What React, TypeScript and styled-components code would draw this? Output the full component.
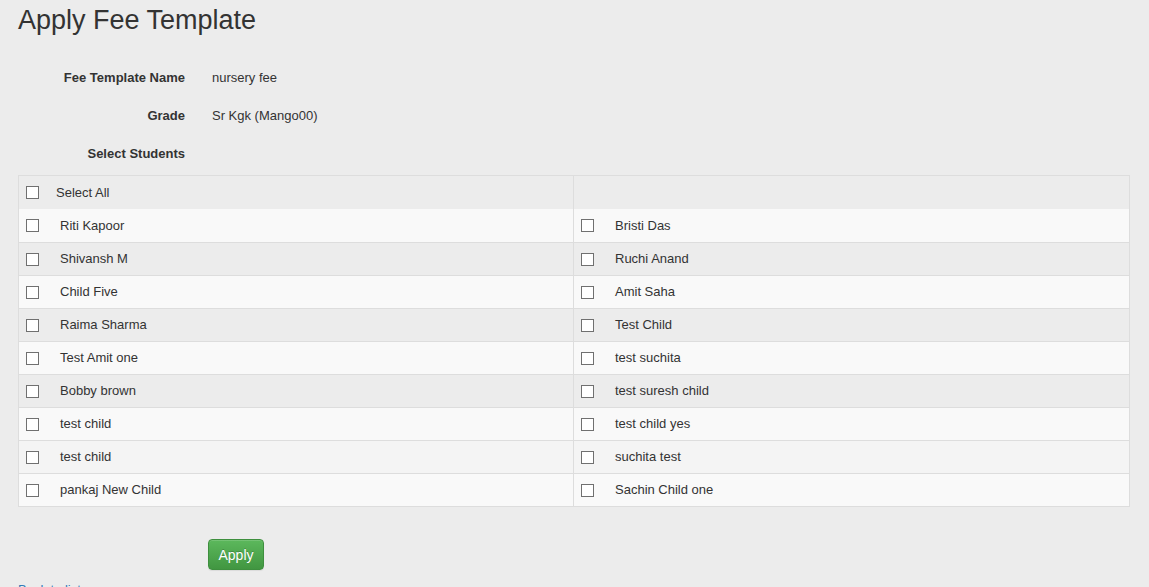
import React from "react";
import styled, { createGlobalStyle } from "styled-components";

const GlobalStyle = createGlobalStyle`
  html, body {
    margin: 0;
    padding: 0;
    background: #ececec;
  }
  body {
    font-family: "Liberation Sans", Arial, Helvetica, sans-serif;
    font-size: 13px;
    color: #333;
  }
`;

const Page = styled.div`
  padding: 5px 19px 0 18px;
`;

const Title = styled.h1`
  margin: 0;
  font-size: 27px;
  font-weight: normal;
  line-height: 30px;
  color: #333;
`;

const Form = styled.div`
  margin-top: 23px;
`;

const FieldRow = styled.div`
  display: grid;
  grid-template-columns: 167px 1fr;
  column-gap: 27px;
  height: 38px;
  align-items: center;
`;

const Label = styled.div`
  font-weight: bold;
  text-align: right;
`;

const Value = styled.div``;

const Table = styled.div`
  margin-top: 3px;
  border: 1px solid #ddd;
`;

const Row = styled.div<{ $bg: string; $bordered: boolean }>`
  display: grid;
  grid-template-columns: 554px 1fr;
  height: ${(p) => (p.$bordered ? 32 : 33)}px;
  background: ${(p) => p.$bg};
  border-top: ${(p) => (p.$bordered ? "1px solid #ddd" : "none")};
`;

const Cell = styled.label<{ $divider?: boolean; $gap: number }>`
  display: flex;
  align-items: center;
  gap: ${(p) => p.$gap}px;
  padding-left: 7px;
  line-height: 18px;
  border-left: ${(p) => (p.$divider ? "1px solid #ddd" : "none")};
`;

const Check = styled.input.attrs({ type: "checkbox" })`
  appearance: none;
  -webkit-appearance: none;
  margin: 0;
  width: 13px;
  height: 13px;
  border: 1px solid #707070;
  background: #fff;
  border-radius: 0;
  flex: none;
`;

const ApplyButton = styled.button`
  display: block;
  margin: 32px 0 0 190px;
  width: 56px;
  height: 31px;
  padding: 0;
  font-family: "Liberation Sans", Arial, sans-serif;
  font-size: 14px;
  color: #fff;
  background: linear-gradient(to bottom, #5cb85c 0%, #419641 100%);
  border: 1px solid #3e8f3e;
  border-radius: 4px;
  box-shadow: inset 0 1px 0 rgba(255, 255, 255, 0.15), 0 1px 1px rgba(0, 0, 0, 0.075);
  text-shadow: 0 -1px 0 rgba(0, 0, 0, 0.2);
  cursor: pointer;
`;

const BackLink = styled.a`
  display: block;
  margin-top: 11px;
  color: #337ab7;
  text-decoration: none;
  line-height: 18px;
`;

const left = [
  "Riti Kapoor",
  "Shivansh M",
  "Child Five",
  "Raima Sharma",
  "Test Amit one",
  "Bobby brown",
  "test child",
  "test child",
  "pankaj New Child",
];
const right = [
  "Bristi Das",
  "Ruchi Anand",
  "Amit Saha",
  "Test Child",
  "test suchita",
  "test suresh child",
  "test child yes",
  "suchita test",
  "Sachin Child one",
];

function rowBg(i: number): string {
  if (i === 7) return "#f4f4f4";
  return i % 2 === 0 ? "#f9f9f9" : "transparent";
}

export default function App() {
  return (
    <>
      <GlobalStyle />
      <Page>
        <Title>Apply Fee Template</Title>
        <Form>
          <FieldRow>
            <Label>Fee Template Name</Label>
            <Value>nursery fee</Value>
          </FieldRow>
          <FieldRow>
            <Label>Grade</Label>
            <Value>Sr Kgk (Mango00)</Value>
          </FieldRow>
          <FieldRow>
            <Label>Select Students</Label>
            <Value />
          </FieldRow>
        </Form>
        <Table>
          <Row $bg="transparent" $bordered={false}>
            <Cell $gap={17}>
              <Check />
              <span>Select All</span>
            </Cell>
            <Cell $divider $gap={21} />
          </Row>
          {left.map((name, i) => (
            <Row key={i} $bg={rowBg(i)} $bordered={i > 0}>
              <Cell $gap={21}>
                <Check />
                <span>{name}</span>
              </Cell>
              <Cell $divider $gap={21}>
                <Check />
                <span>{right[i]}</span>
              </Cell>
            </Row>
          ))}
        </Table>
        <ApplyButton>Apply</ApplyButton>
        <BackLink href="#">Back to list</BackLink>
      </Page>
    </>
  );
}
